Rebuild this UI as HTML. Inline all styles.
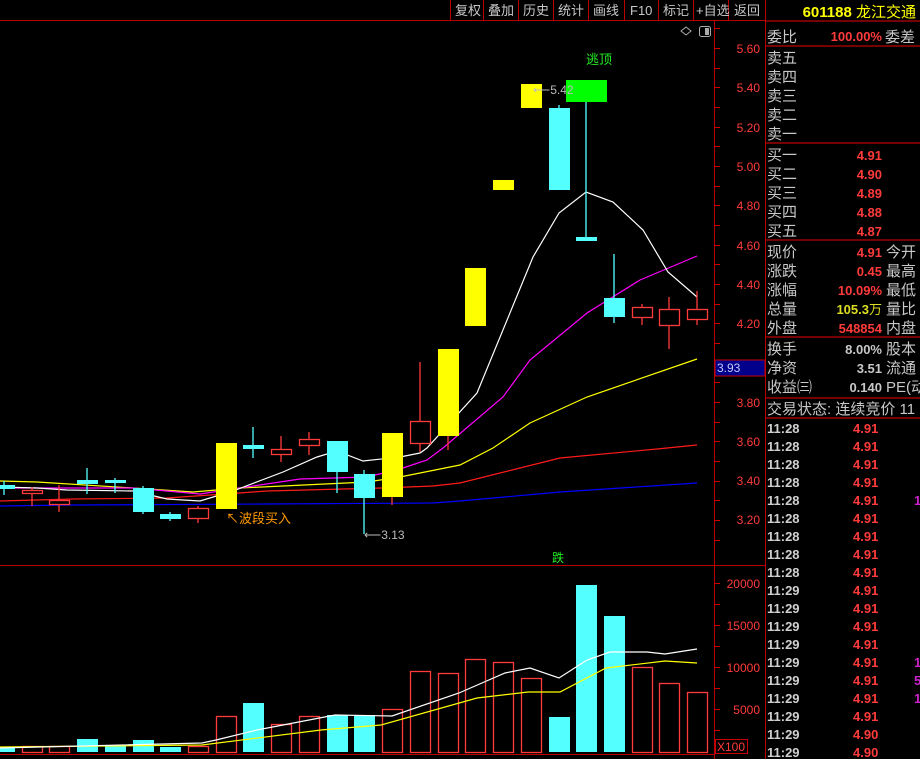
<!DOCTYPE html>
<html><head><meta charset="utf-8"><style>
html,body{margin:0;padding:0;background:#000;width:920px;height:759px;overflow:hidden}
svg{display:block}
text{font-family:"Liberation Sans","Noto Sans CJK SC",sans-serif}
.tb{fill:#c8c8c8;font-size:13px}
.ax{fill:#ff3b3b;font-size:12px}
.lb{fill:#c8c8c8;font-size:15px}
.rd{fill:#ff3b3b;font-size:13px;font-weight:bold}
.tm{fill:#d0d0d0;font-size:13px;font-weight:bold}
.cy{fill:#54ffff}
.rh{fill:none;stroke:#ff3b3b;stroke-width:1.3}
</style></head><body>
<svg width="920" height="759" viewBox="0 0 920 759" xmlns="http://www.w3.org/2000/svg">
<rect width="920" height="759" fill="#000"/>
<!-- toolbar -->
<g stroke="#b00" stroke-width="1">
<line x1="0" y1="20.5" x2="765" y2="20.5"/>
<line x1="450.5" y1="0" x2="450.5" y2="20"/><line x1="483.5" y1="0" x2="483.5" y2="20"/>
<line x1="518.5" y1="0" x2="518.5" y2="20"/><line x1="553.5" y1="0" x2="553.5" y2="20"/>
<line x1="588.5" y1="0" x2="588.5" y2="20"/><line x1="624.5" y1="0" x2="624.5" y2="20"/>
<line x1="658.5" y1="0" x2="658.5" y2="20"/><line x1="693.5" y1="0" x2="693.5" y2="20"/>
<line x1="728.5" y1="0" x2="728.5" y2="20"/>
<line x1="765.5" y1="0" x2="765.5" y2="759"/>
<line x1="714.5" y1="20" x2="714.5" y2="759"/>
<line x1="0" y1="565.5" x2="765" y2="565.5"/>
<line x1="0" y1="754.5" x2="714" y2="754.5"/>
</g>
<g class="tb">
<text x="455" y="15">复权</text><text x="488" y="15">叠加</text><text x="523" y="15">历史</text>
<text x="558" y="15">统计</text><text x="593" y="15">画线</text><text x="630" y="15">F10</text>
<text x="663" y="15">标记</text><text x="696" y="15">+自选</text><text x="734" y="15">返回</text>
</g>
<!-- icons -->
<path d="M686 27 L691 31 L686 35 L681 31 Z" fill="none" stroke="#aaa"/>
<rect x="699.5" y="26.5" width="11" height="10" rx="2" fill="none" stroke="#aaa"/>
<rect x="705" y="28" width="4" height="7" fill="#aaa"/>
<!-- axis ticks -->
<g stroke="#c00">
<line x1="714" y1="28.5" x2="720" y2="28.5"/><line x1="714" y1="48.5" x2="720" y2="48.5"/><line x1="714" y1="68.5" x2="720" y2="68.5"/><line x1="714" y1="87.5" x2="720" y2="87.5"/><line x1="714" y1="107.5" x2="720" y2="107.5"/><line x1="714" y1="127.5" x2="720" y2="127.5"/><line x1="714" y1="146.5" x2="720" y2="146.5"/><line x1="714" y1="166.5" x2="720" y2="166.5"/><line x1="714" y1="186.5" x2="720" y2="186.5"/><line x1="714" y1="205.5" x2="720" y2="205.5"/><line x1="714" y1="225.5" x2="720" y2="225.5"/><line x1="714" y1="245.5" x2="720" y2="245.5"/><line x1="714" y1="264.5" x2="720" y2="264.5"/><line x1="714" y1="284.5" x2="720" y2="284.5"/><line x1="714" y1="304.5" x2="720" y2="304.5"/><line x1="714" y1="323.5" x2="720" y2="323.5"/><line x1="714" y1="343.5" x2="720" y2="343.5"/><line x1="714" y1="363.5" x2="720" y2="363.5"/><line x1="714" y1="382.5" x2="720" y2="382.5"/><line x1="714" y1="402.5" x2="720" y2="402.5"/><line x1="714" y1="422.5" x2="720" y2="422.5"/><line x1="714" y1="441.5" x2="720" y2="441.5"/><line x1="714" y1="461.5" x2="720" y2="461.5"/><line x1="714" y1="481.5" x2="720" y2="481.5"/><line x1="714" y1="500.5" x2="720" y2="500.5"/><line x1="714" y1="520.5" x2="720" y2="520.5"/><line x1="714" y1="540.5" x2="720" y2="540.5"/>
<line x1="714" y1="583.5" x2="720" y2="583.5"/><line x1="714" y1="604.5" x2="720" y2="604.5"/><line x1="714" y1="625.5" x2="720" y2="625.5"/><line x1="714" y1="646.5" x2="720" y2="646.5"/><line x1="714" y1="667.5" x2="720" y2="667.5"/><line x1="714" y1="688.5" x2="720" y2="688.5"/><line x1="714" y1="709.5" x2="720" y2="709.5"/><line x1="714" y1="730.5" x2="720" y2="730.5"/>
</g>
<g class="ax" text-anchor="end">
<text x="760" y="53">5.60</text><text x="760" y="92">5.40</text><text x="760" y="132">5.20</text>
<text x="760" y="171">5.00</text><text x="760" y="210">4.80</text><text x="760" y="250">4.60</text>
<text x="760" y="289">4.40</text><text x="760" y="328">4.20</text><text x="760" y="407">3.80</text>
<text x="760" y="446">3.60</text><text x="760" y="485">3.40</text><text x="760" y="524">3.20</text>
<text x="760" y="588">20000</text><text x="760" y="630">15000</text><text x="760" y="672">10000</text><text x="760" y="714">5000</text>
</g>
<rect x="715" y="360" width="50" height="16" fill="#00008b" stroke="#c00"/>
<text x="717" y="372" fill="#c8c8ff" font-size="12">3.93</text>
<rect x="715.5" y="739.5" width="32" height="14" fill="none" stroke="#c00"/>
<text x="717" y="751" class="ax">X100</text>

<!-- MA lines price -->
<g fill="none" stroke-width="1.2">
<polyline stroke="#0000ff" points="0,506 73,505 267,504 433,503 460,501 560,492 697,483"/>
<polyline stroke="#ff1a1a" points="0,501 73,499 167,498 267,491 383,488 433,486 460,483 560,458 657,449 697,445"/>
<polyline stroke="#ffff00" points="0,481 37,482 133,488 193,492 240,488 367,482 400,477 460,465 493,448 530,423 587,397 697,359"/>
<polyline stroke="#ff00ff" points="0,488 133,488 200,494 240,488 300,479 367,477 400,469 427,460 443,448 503,397 530,360 587,313 640,280 697,256"/>
<polyline stroke="#ffffff" points="0,487 37,488 67,490 133,491 167,499 200,501 233,491 283,472 317,457 337,451 363,461 400,457 420,453 427,448 477,393 533,257 559,213 586,192 613,202 643,230 668,272 697,297"/>
</g>
<!-- candles -->
<g stroke="#54ffff" stroke-width="1.3">
<line x1="4" y1="481" x2="4" y2="495"/><line x1="87" y1="468" x2="87" y2="494"/><line x1="115" y1="478" x2="115" y2="493"/><line x1="143" y1="486" x2="143" y2="514"/><line x1="170" y1="512" x2="170" y2="521"/><line x1="253" y1="427" x2="253" y2="458"/><line x1="337" y1="441" x2="337" y2="493"/><line x1="364" y1="470" x2="364" y2="534"/><line x1="559" y1="105" x2="559" y2="110"/><line x1="586" y1="95" x2="586" y2="240"/><line x1="614" y1="254" x2="614" y2="323"/>
</g>
<g stroke="#ff3b3b" stroke-width="1.3">
<line x1="32" y1="487" x2="32" y2="506"/><line x1="59" y1="485" x2="59" y2="512"/><line x1="198" y1="506" x2="198" y2="523"/><line x1="281" y1="436" x2="281" y2="462"/><line x1="309" y1="432" x2="309" y2="455"/><line x1="392" y1="497" x2="392" y2="505"/><line x1="420" y1="362" x2="420" y2="452"/><line x1="448" y1="436" x2="448" y2="450"/><line x1="642" y1="304" x2="642" y2="325"/><line x1="669" y1="297" x2="669" y2="349"/><line x1="697" y1="291" x2="697" y2="325"/>
</g>
<g class="cy">
<rect x="0" y="485" width="15" height="4"/><rect x="77" y="480" width="21" height="4"/><rect x="105" y="480" width="21" height="3"/><rect x="133" y="488" width="21" height="24"/><rect x="160" y="514" width="21" height="5"/><rect x="243" y="445" width="21" height="4"/><rect x="327" y="441" width="21" height="31"/><rect x="354" y="474" width="21" height="24"/><rect x="549" y="108" width="21" height="82"/><rect x="576" y="237" width="21" height="4"/><rect x="604" y="298" width="21" height="19"/>
</g>
<g class="rh" fill="#000">
<rect x="22.5" y="490.5" width="20" height="3" fill="#000"/><rect x="49.5" y="500.5" width="20" height="4" fill="#000"/><rect x="188.5" y="508.5" width="20" height="10" fill="#000"/><rect x="271.5" y="449.5" width="20" height="5" fill="#000"/><rect x="299.5" y="439.5" width="20" height="6" fill="#000"/><rect x="410.5" y="421.5" width="20" height="22" fill="#000"/><rect x="632.5" y="307.5" width="20" height="10" fill="#000"/><rect x="659.5" y="309.5" width="20" height="16" fill="#000"/><rect x="687.5" y="309.5" width="20" height="10" fill="#000"/>
</g>
<g fill="#ffff00">
<rect x="216" y="443" width="21" height="66"/><rect x="382" y="433" width="21" height="64"/><rect x="438" y="349" width="21" height="87"/><rect x="465" y="268" width="21" height="58"/><rect x="493" y="180" width="21" height="10"/><rect x="521" y="84" width="21" height="24"/>
</g>
<rect x="566" y="80" width="41" height="22" fill="#00ff00"/>
<text x="586" y="64" fill="#22ee22" font-size="13">逃顶</text>
<text x="533" y="94" fill="#bbb" font-size="12">⟵5.42</text>
<text x="364" y="539" fill="#bbb" font-size="12">⟵3.13</text>
<text x="226" y="523" fill="#ff9900" font-size="13">↖波段买入</text>
<text x="552" y="562" fill="#22ee22" font-size="12">跌</text>

<!-- volume -->
<g class="cy">
<rect x="0" y="748" width="15" height="4"/><rect x="77" y="739" width="21" height="13"/><rect x="105" y="746" width="21" height="6"/><rect x="133" y="740" width="21" height="12"/><rect x="160" y="747" width="21" height="5"/><rect x="243" y="703" width="21" height="49"/><rect x="327" y="715" width="21" height="37"/><rect x="354" y="715" width="21" height="37"/><rect x="549" y="717" width="21" height="35"/><rect x="576" y="585" width="21" height="167"/><rect x="604" y="616" width="21" height="136"/>
</g>
<g class="rh">
<rect x="22.5" y="746.5" width="20" height="6"/><rect x="49.5" y="746.5" width="20" height="6"/><rect x="188.5" y="746.5" width="20" height="6"/><rect x="216.5" y="716.5" width="20" height="36"/><rect x="271.5" y="724.5" width="20" height="28"/><rect x="299.5" y="716.5" width="20" height="36"/><rect x="382.5" y="709.5" width="20" height="43"/><rect x="410.5" y="671.5" width="20" height="81"/><rect x="438.5" y="673.5" width="20" height="79"/><rect x="465.5" y="659.5" width="20" height="93"/><rect x="493.5" y="662.5" width="20" height="90"/><rect x="521.5" y="678.5" width="20" height="74"/><rect x="632.5" y="667.5" width="20" height="85"/><rect x="659.5" y="683.5" width="20" height="69"/><rect x="687.5" y="692.5" width="20" height="60"/>
</g>
<g fill="none" stroke-width="1.2">
<polyline stroke="#ffff00" points="0,747 202,745 321,730 381,725 477,698 528,692 560,692 606,668 665,661 697,663"/>
<polyline stroke="#ffffff" points="0,748 202,743 216,740 257,730 335,715 392,716 459,693 505,673 530,668 559,678 587,660 610,652 647,652 665,654 697,649"/>
</g>

<!-- right panel -->
<g stroke="#b00" stroke-width="1.3">
<line x1="765" y1="21" x2="920" y2="21"/><line x1="765" y1="46" x2="920" y2="46"/><line x1="765" y1="143" x2="920" y2="143"/><line x1="765" y1="240" x2="920" y2="240"/><line x1="765" y1="337" x2="920" y2="337"/><line x1="765" y1="398" x2="920" y2="398"/><line x1="765" y1="418" x2="920" y2="418"/>
</g>
<text x="916" y="17" text-anchor="end" fill="#ffff00" font-size="15" font-weight="bold">601188 <tspan font-weight="normal">龙江交通</tspan></text>
<g class="lb">
<text x="767" y="42">委比</text><text x="885" y="42">委差</text>
<text x="767" y="63">卖五</text><text x="767" y="82">卖四</text><text x="767" y="101">卖三</text><text x="767" y="120">卖二</text><text x="767" y="139">卖一</text>
<text x="767" y="160">买一</text><text x="767" y="179">买二</text><text x="767" y="198">买三</text><text x="767" y="217">买四</text><text x="767" y="236">买五</text>
<text x="767" y="257">现价</text><text x="767" y="276">涨跌</text><text x="767" y="295">涨幅</text><text x="767" y="314">总量</text><text x="767" y="333">外盘</text>
<text x="886" y="257">今开</text><text x="886" y="276">最高</text><text x="886" y="295">最低</text><text x="886" y="314">量比</text><text x="886" y="333">内盘</text>
<text x="767" y="354">换手</text><text x="767" y="373">净资</text><text x="767" y="392">收益㈢</text>
<text x="886" y="354">股本</text><text x="886" y="373">流通</text><text x="886" y="392">PE(动</text>
<text x="767" y="414">交易状态: 连续竞价 11</text>
</g>
<g class="rd" text-anchor="end">
<text x="882" y="41">100.00%</text>
<text x="882" y="160">4.91</text><text x="882" y="179">4.90</text><text x="882" y="198">4.89</text><text x="882" y="217">4.88</text><text x="882" y="236">4.87</text>
<text x="882" y="257">4.91</text><text x="882" y="276">0.45</text><text x="882" y="295">10.09%</text><text x="882" y="314" fill="#dddd22">105.3<tspan font-weight="normal">万</tspan></text><text x="882" y="333">548854</text>
<text x="882" y="354" fill="#c8c8c8">8.00%</text><text x="882" y="373" fill="#c8c8c8">3.51</text><text x="882" y="392" fill="#c8c8c8">0.140</text>
</g>
<g class="tm">
<text x="767" y="433">11:28</text><text x="767" y="451">11:28</text><text x="767" y="469">11:28</text><text x="767" y="487">11:28</text><text x="767" y="505">11:28</text><text x="767" y="523">11:28</text><text x="767" y="541">11:28</text><text x="767" y="559">11:28</text><text x="767" y="577">11:28</text><text x="767" y="595">11:29</text><text x="767" y="613">11:29</text><text x="767" y="631">11:29</text><text x="767" y="649">11:29</text><text x="767" y="667">11:29</text><text x="767" y="685">11:29</text><text x="767" y="703">11:29</text><text x="767" y="721">11:29</text><text x="767" y="739">11:29</text><text x="767" y="757">11:29</text>
</g>
<g class="rd">
<text x="853" y="433">4.91</text><text x="853" y="451">4.91</text><text x="853" y="469">4.91</text><text x="853" y="487">4.91</text><text x="853" y="505">4.91</text><text x="853" y="523">4.91</text><text x="853" y="541">4.91</text><text x="853" y="559">4.91</text><text x="853" y="577">4.91</text><text x="853" y="595">4.91</text><text x="853" y="613">4.91</text><text x="853" y="631">4.91</text><text x="853" y="649">4.91</text><text x="853" y="667">4.91</text><text x="853" y="685">4.91</text><text x="853" y="703">4.91</text><text x="853" y="721">4.91</text><text x="853" y="739">4.90</text><text x="853" y="757">4.90</text>
</g>
<g fill="#cc22cc" font-size="13" font-weight="bold">
<text x="914" y="505">1</text><text x="914" y="667">1</text><text x="914" y="685">5</text><text x="914" y="703">1</text>
</g>
</svg>
</body></html>
